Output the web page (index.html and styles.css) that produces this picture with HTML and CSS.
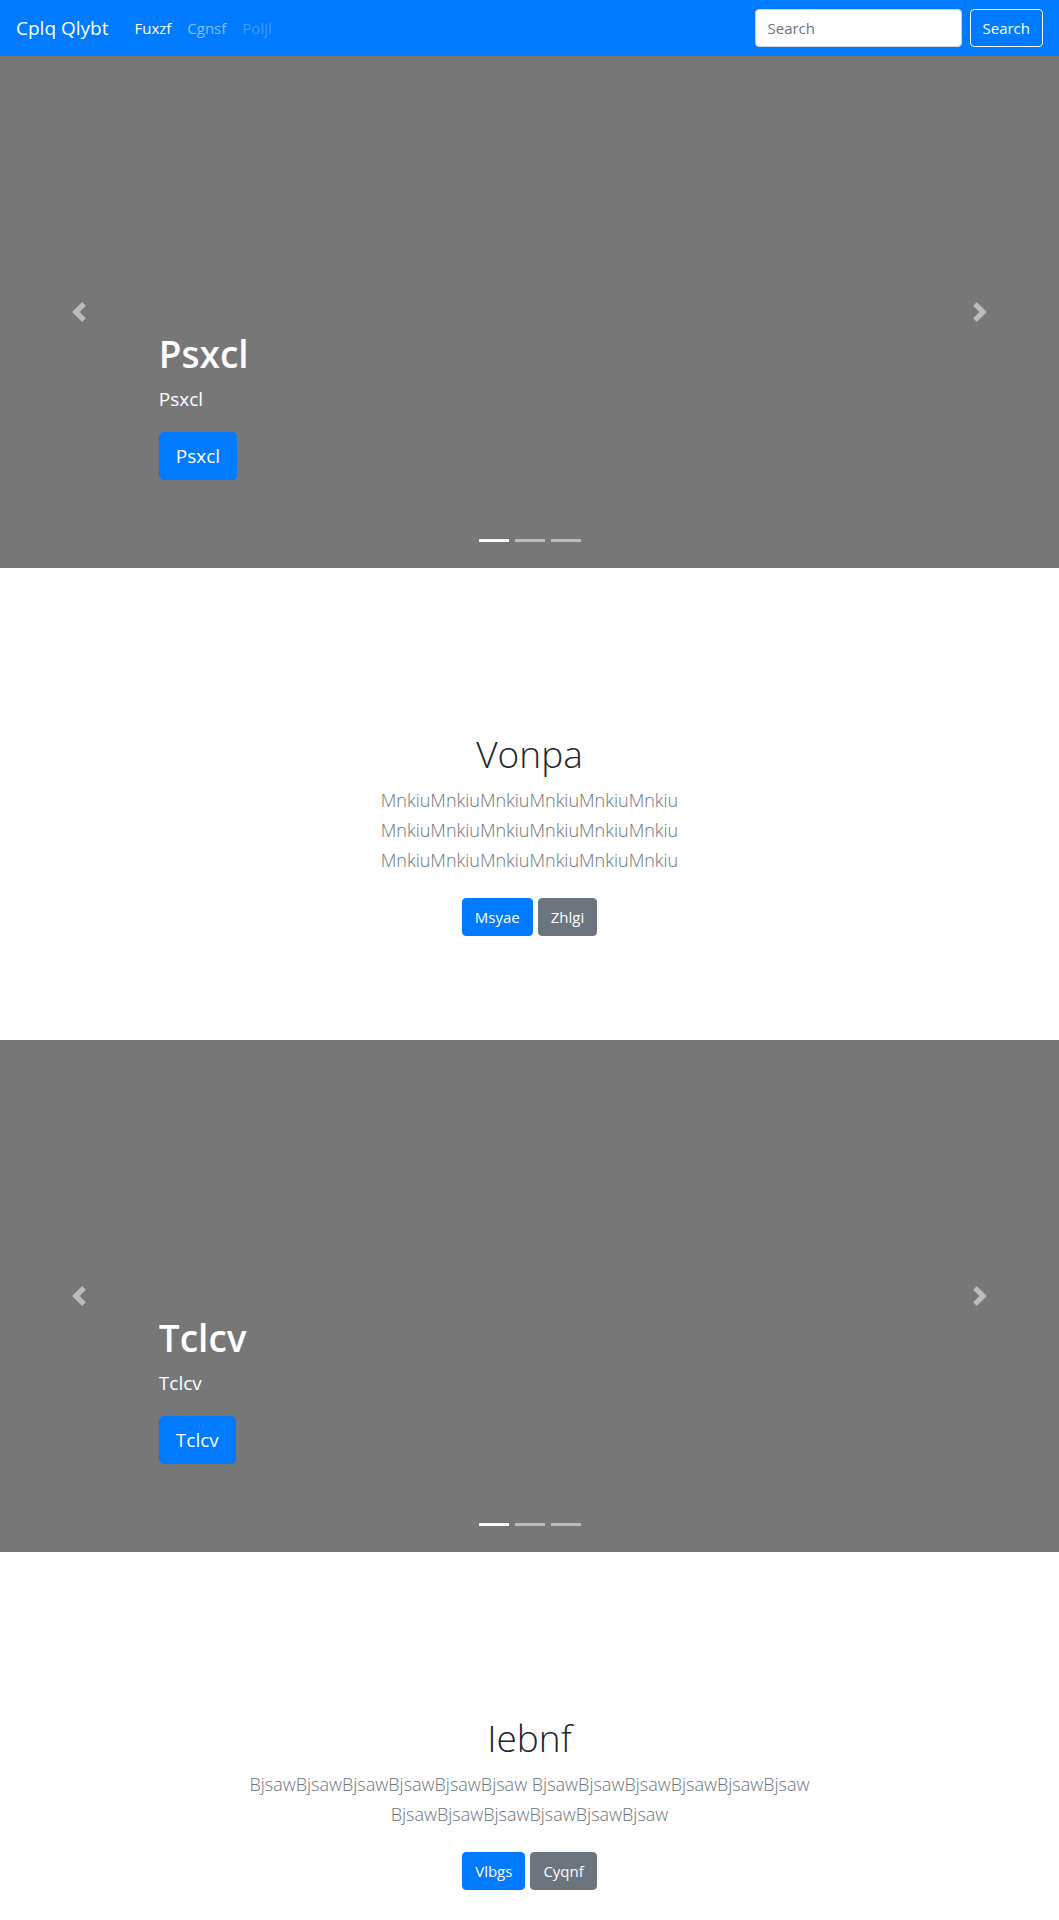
FILE: index.html
```html
<!DOCTYPE html>
<html lang="en">
<head>
  <meta charset="utf-8">
  <meta name="viewport" content="width=device-width, initial-scale=1">
  <title>Cplq Qlybt</title>
  <link rel="stylesheet" href="styles.css">
</head>
<body>
  <header class="navbar">
    <a class="brand" href="#">Cplq Qlybt</a>
    <nav class="nav">
      <a class="nav-link active" href="#">Fuxzf</a>
      <a class="nav-link" href="#">Cgnsf</a>
      <a class="nav-link disabled" href="#" aria-disabled="true">Poljl</a>
    </nav>
    <form class="search">
      <input class="search-input" type="search" placeholder="Search" aria-label="Search">
      <button class="btn btn-outline" type="submit">Search</button>
    </form>
  </header>

  <main>
    <section class="carousel">
      <button class="control" type="button" aria-label="Previous">
        <svg class="chevron" viewBox="0 0 8 8"><path d="M5.25 0l-4 4 4 4 1.5-1.5L4.25 4l2.5-2.5L5.25 0z"/></svg>
      </button>
      <div class="caption">
        <h1 class="caption-title">Psxcl</h1>
        <p class="caption-text">Psxcl</p>
        <a class="btn btn-primary btn-large" href="#">Psxcl</a>
      </div>
      <div class="indicators">
        <button class="indicator current" type="button" aria-label="Slide 1"></button>
        <button class="indicator" type="button" aria-label="Slide 2"></button>
        <button class="indicator" type="button" aria-label="Slide 3"></button>
      </div>
      <button class="control control-next" type="button" aria-label="Next">
        <svg class="chevron" viewBox="0 0 8 8"><path d="M2.75 0l-1.5 1.5L3.75 4l-2.5 2.5L2.75 8l4-4-4-4z"/></svg>
      </button>
    </section>

    <section class="intro">
      <h1 class="intro-title">Vonpa</h1>
      <p class="lead">MnkiuMnkiuMnkiuMnkiuMnkiuMnkiu<br>MnkiuMnkiuMnkiuMnkiuMnkiuMnkiu<br>MnkiuMnkiuMnkiuMnkiuMnkiuMnkiu</p>
      <div class="actions">
        <a class="btn btn-primary" href="#">Msyae</a>
        <a class="btn btn-secondary" href="#">Zhlgi</a>
      </div>
    </section>

    <section class="carousel">
      <button class="control" type="button" aria-label="Previous">
        <svg class="chevron" viewBox="0 0 8 8"><path d="M5.25 0l-4 4 4 4 1.5-1.5L4.25 4l2.5-2.5L5.25 0z"/></svg>
      </button>
      <div class="caption">
        <h1 class="caption-title">Tclcv</h1>
        <p class="caption-text">Tclcv</p>
        <a class="btn btn-primary btn-large" href="#">Tclcv</a>
      </div>
      <div class="indicators">
        <button class="indicator current" type="button" aria-label="Slide 1"></button>
        <button class="indicator" type="button" aria-label="Slide 2"></button>
        <button class="indicator" type="button" aria-label="Slide 3"></button>
      </div>
      <button class="control control-next" type="button" aria-label="Next">
        <svg class="chevron" viewBox="0 0 8 8"><path d="M2.75 0l-1.5 1.5L3.75 4l-2.5 2.5L2.75 8l4-4-4-4z"/></svg>
      </button>
    </section>

    <section class="intro intro-last">
      <h1 class="intro-title">Iebnf</h1>
      <p class="lead">BjsawBjsawBjsawBjsawBjsawBjsaw BjsawBjsawBjsawBjsawBjsawBjsaw<br>BjsawBjsawBjsawBjsawBjsawBjsaw</p>
      <div class="actions">
        <a class="btn btn-primary" href="#">Vlbgs</a>
        <a class="btn btn-secondary" href="#">Cyqnf</a>
      </div>
    </section>
  </main>
</body>
</html>
```
FILE: styles.css
```css
*,
*::before,
*::after {
  box-sizing: border-box;
}

body {
  margin: 0;
  background: #fff;
  color: #212529;
  font-family: "Segoe UI", "Open Sans", "Noto Sans", sans-serif;
  font-size: 15px;
  line-height: 24px;
}

h1,
p {
  margin: 0;
}

a {
  color: inherit;
  text-decoration: none;
}

/* Navigation bar */
.navbar {
  display: flex;
  align-items: center;
  gap: 26px;
  padding: 9px 16px;
  background: #007bff;
  color: #fff;
}

.brand {
  font-size: 19px;
}

.nav {
  display: flex;
  flex: 1;
  gap: 16px;
}

.nav-link {
  color: rgba(255, 255, 255, 0.5);
}

.nav-link.active {
  color: #fff;
}

.nav-link.disabled {
  color: rgba(255, 255, 255, 0.25);
}

.search {
  display: flex;
  gap: 8px;
}

.search-input {
  width: 207px;
  height: 38px;
  padding: 6px 12px;
  border: 1px solid #ced4da;
  border-radius: 4px;
  background: #fff;
  color: #495057;
  font: inherit;
  appearance: none;
}

.search-input::placeholder {
  color: #6c757d;
  opacity: 1;
}

/* Buttons */
.btn {
  display: inline-block;
  padding: 6px 12px;
  border: 1px solid transparent;
  border-radius: 4px;
  background: transparent;
  color: #fff;
  font: inherit;
  text-align: center;
  cursor: pointer;
}

.btn-outline {
  border-color: #f8f9fa;
}

.btn-primary {
  border-color: #007bff;
  background: #007bff;
}

.btn-secondary {
  border-color: #6c757d;
  background: #6c757d;
}

.btn-large {
  padding: 8px 16px;
  border-radius: 5px;
  font-size: 19px;
  line-height: 30px;
}

/* Carousel */
.carousel {
  display: grid;
  grid-template-columns: 15% 1fr 15%;
  grid-template-rows: 1fr auto;
  min-height: 512px;
  background: #777;
  color: #fff;
}

.control {
  display: flex;
  grid-column: 1;
  grid-row: 1 / 3;
  align-items: center;
  justify-content: center;
  padding: 0;
  border: 0;
  background: none;
  color: #fff;
  opacity: 0.5;
  cursor: pointer;
}

.control-next {
  grid-column: 3;
}

.chevron {
  width: 20px;
  height: 20px;
  fill: currentColor;
}

.caption {
  grid-column: 2;
  grid-row: 1;
  align-self: end;
  padding-bottom: 59px;
  font-size: 19px;
  font-weight: 500;
  line-height: 30px;
}

.caption-title {
  margin-bottom: 6px;
  font-size: 37px;
  font-weight: 600;
  line-height: 48px;
}

.caption-text {
  margin-bottom: 18px;
}

.indicators {
  display: flex;
  grid-column: 2;
  grid-row: 2;
  gap: 6px;
  justify-content: center;
  padding-bottom: 26px;
}

.indicator {
  width: 30px;
  height: 3px;
  padding: 0;
  border: 0;
  background: #fff;
  opacity: 0.5;
  cursor: pointer;
}

.indicator.current {
  opacity: 1;
}

/* Introduction blocks */
.intro {
  padding: 162px 16px 104px;
  text-align: center;
}

.intro-last {
  padding-bottom: 30px;
}

.intro-title {
  margin-bottom: 7px;
  font-size: 37px;
  font-weight: 300;
  line-height: 48px;
}

.lead {
  margin-bottom: 23px;
  color: #6c757d;
  font-size: 18px;
  font-weight: 300;
  line-height: 30px;
}

.actions {
  display: flex;
  gap: 5px;
  justify-content: center;
}
```
